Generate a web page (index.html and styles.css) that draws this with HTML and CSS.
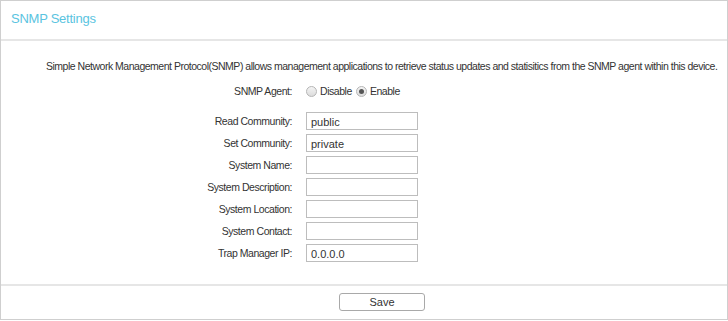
FILE: index.html
```html
<!DOCTYPE html>
<html lang="en">
<head>
    <meta charset="UTF-8">
    <title>SNMP Settings</title>
    <link rel="stylesheet" href="styles.css">
</head>
<body>
    <div class="panel">
        <div class="panel-head">
            <h2>SNMP Settings</h2>
        </div>
        <div class="panel-body">
            <p class="desc">Simple Network Management Protocol(SNMP) allows management applications to retrieve status updates and statisitics from the SNMP agent within this device.</p>
            <div class="row agent">
                <label>SNMP Agent:</label>
                <span class="radio"></span><span class="opt">Disable</span>
                <span class="radio checked"></span><span class="opt">Enable</span>
            </div>
            <div class="fields">
                <div class="row"><label for="readCom">Read Community:</label><input type="text" id="readCom" value="public"></div>
                <div class="row"><label for="setCom">Set Community:</label><input type="text" id="setCom" value="private"></div>
                <div class="row"><label for="sysName">System Name:</label><input type="text" id="sysName"></div>
                <div class="row"><label for="sysDesc">System Description:</label><input type="text" id="sysDesc"></div>
                <div class="row"><label for="sysLoc">System Location:</label><input type="text" id="sysLoc"></div>
                <div class="row"><label for="sysContact">System Contact:</label><input type="text" id="sysContact"></div>
                <div class="row"><label for="trapIp">Trap Manager IP:</label><input type="text" id="trapIp" value="0.0.0.0"></div>
            </div>
        </div>
        <div class="panel-foot">
            <button>Save</button>
        </div>
    </div>
</body>
</html>
```

FILE: styles.css
```css
body {
    margin: 0;
    font-family: "Liberation Sans", Arial, sans-serif;
    font-size: 10.5px;
    letter-spacing: -0.45px;
    color: #333;
}
.panel {
    width: 728px;
    height: 320px;
    box-sizing: border-box;
    border: 1px solid #cfcfcf;
    display: flex;
    flex-direction: column;
}
.panel-head {
    height: 38px;
    border-bottom: 2px solid #e6e6e6;
}
.panel-head h2 {
    margin: 0;
    padding-left: 10px;
    font-size: 13px;
    font-weight: normal;
    letter-spacing: -0.25px;
    line-height: 36px;
    color: #5ac4df;
}
.panel-body {
    flex: 1;
}
.desc {
    margin: 19px 0 0 45px;
    line-height: 13px;
    letter-spacing: -0.49px;
    white-space: nowrap;
}
.row {
    display: flex;
    align-items: center;
}
.row label {
    width: 291px;
    margin-right: 14px;
    text-align: right;
}
.agent {
    margin-top: 11px;
    height: 14px;
}
.radio {
    width: 9px;
    height: 9px;
    border: 1px solid #b5b5b5;
    border-radius: 50%;
    background: linear-gradient(#f4f4f4, #dcdcdc);
    position: relative;
    margin-right: 3px;
}
.radio.checked::after {
    content: "";
    position: absolute;
    left: 2px;
    top: 2px;
    width: 5px;
    height: 5px;
    border-radius: 50%;
    background: #555;
}
.opt {
    margin-right: 4px;
}
.fields {
    margin-top: 14px;
    display: flex;
    flex-direction: column;
    gap: 4px;
}
.fields input {
    width: 112px;
    height: 18px;
    box-sizing: border-box;
    border: 1px solid #bdbdbd;
    padding: 1px 4px 0;
    font-family: inherit;
    font-size: 11px;
    letter-spacing: 0;
    color: #333;
    outline: none;
}
.panel-foot {
    height: 35px;
    border-top: 2px solid #e6e6e6;
    display: flex;
    justify-content: center;
    padding-top: 7px;
    box-sizing: border-box;
}
.panel-foot button {
    width: 86px;
    height: 18px;
    margin-left: 36px;
    border: 1px solid #a9a9a9;
    border-radius: 3px;
    background: #fff;
    font-family: inherit;
    font-size: 11px;
    letter-spacing: 0;
    color: #333;
    padding: 0;
    cursor: pointer;
}
```
